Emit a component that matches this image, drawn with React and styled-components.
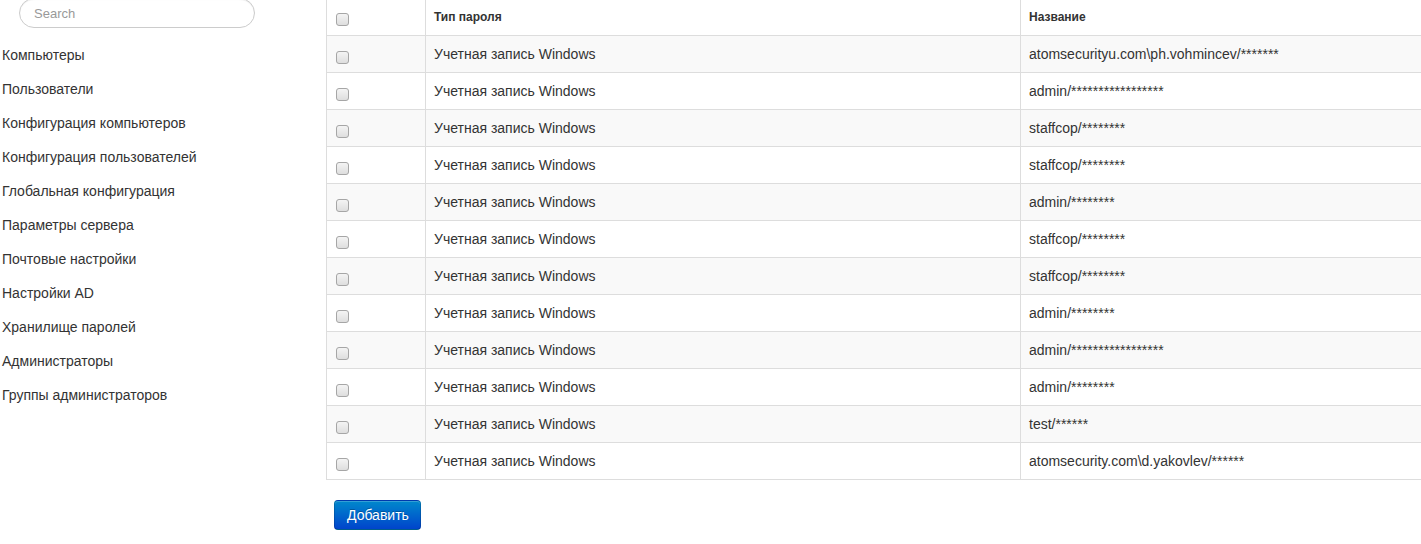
import React from 'react';
import styled, { createGlobalStyle } from 'styled-components';

const GlobalStyle = createGlobalStyle`
  html, body {
    margin: 0;
    padding: 0;
    background: #fff;
    overflow: hidden;
  }
  body {
    font-family: "Liberation Sans", Arial, sans-serif;
    font-size: 14px;
    color: #333;
  }
`;

const menu = [
  'Компьютеры',
  'Пользователи',
  'Конфигурация компьютеров',
  'Конфигурация пользователей',
  'Глобальная конфигурация',
  'Параметры сервера',
  'Почтовые настройки',
  'Настройки AD',
  'Хранилище паролей',
  'Администраторы',
  'Группы администраторов',
];

const rows = [
  'atomsecurityu.com\\ph.vohmincev/*******',
  'admin/*****************',
  'staffcop/********',
  'staffcop/********',
  'admin/********',
  'staffcop/********',
  'staffcop/********',
  'admin/********',
  'admin/*****************',
  'admin/********',
  'test/******',
  'atomsecurity.com\\d.yakovlev/******',
];

const App = () => {
  return (
    <>
      <GlobalStyle />
      <Page>
        <Sidebar>
          <Search placeholder="Search" />
          <Nav>
            {menu.map((item) => (
              <NavItem key={item}>{item}</NavItem>
            ))}
          </Nav>
        </Sidebar>
        <Main>
          <Table>
            <colgroup>
              <col style={{ width: 99 }} />
              <col style={{ width: 595 }} />
              <col />
            </colgroup>
            <thead>
              <tr>
                <Th><Check type="checkbox" $top={6} /></Th>
                <Th>Тип пароля</Th>
                <Th>Название</Th>
              </tr>
            </thead>
            <tbody>
              {rows.map((name, i) => (
                <Row key={i} $striped={i % 2 === 0}>
                  <Td><Check type="checkbox" /></Td>
                  <Td>Учетная запись Windows</Td>
                  <Td>{name}</Td>
                </Row>
              ))}
            </tbody>
          </Table>
          <AddButton>Добавить</AddButton>
        </Main>
      </Page>
    </>
  );
};

export default App;

const Page = styled.div`
  display: grid;
  grid-template-columns: 326px 1fr;
  width: 1421px;
  height: 544px;
  overflow: hidden;
`;

const Sidebar = styled.div`
  display: flex;
  flex-direction: column;
`;

const Search = styled.input`
  box-sizing: border-box;
  width: 236px;
  height: 30px;
  margin: -2px 0 0 19px;
  padding: 0 14px;
  border: 1px solid #ccc;
  border-radius: 15px;
  font-family: "Liberation Sans", Arial, sans-serif;
  font-size: 13px;
  color: #555;
  outline: none;
  box-shadow: inset 0 1px 1px rgba(0, 0, 0, 0.075);
  &::placeholder {
    color: #999;
  }
`;

const Nav = styled.ul`
  list-style: none;
  margin: 10px 0 0;
  padding: 0;
`;

const NavItem = styled.li`
  padding: 7px 2px;
  line-height: 20px;
  font-size: 14px;
  color: #333;
  cursor: pointer;
`;

const Main = styled.div`
  display: flex;
  flex-direction: column;
  align-items: flex-start;
`;

const Table = styled.table`
  width: 1110px;
  margin-top: -2px;
  border-collapse: collapse;
  table-layout: fixed;
  border: 1px solid #ddd;
`;

const Th = styled.th`
  padding: 8px;
  line-height: 20px;
  text-align: left;
  font-size: 12px;
  font-weight: bold;
  vertical-align: top;
  border: 1px solid #ddd;
`;

const Row = styled.tr`
  background: ${(p) => (p.$striped ? '#f9f9f9' : '#fff')};
`;

const Td = styled.td`
  padding: 8px;
  line-height: 20px;
  font-size: 14px;
  vertical-align: top;
  border: 1px solid #ddd;
  white-space: nowrap;
`;

const Check = styled.input`
  appearance: none;
  display: block;
  box-sizing: border-box;
  width: 13px;
  height: 13px;
  margin: ${(p) => p.$top ?? 7}px 0 0 1px;
  border: 1px solid #a6a6a6;
  border-radius: 3px;
  background: linear-gradient(#f4f4f4, #dedede);
`;

const AddButton = styled.button`
  margin: 20px 0 0 8px;
  height: 30px;
  padding: 0 11px 0 12px;
  font-family: "Liberation Sans", Arial, sans-serif;
  font-size: 14px;
  line-height: 20px;
  color: #fff;
  text-shadow: 0 -1px 0 rgba(0, 0, 0, 0.25);
  background: linear-gradient(#0088cc, #0044cc);
  border: 1px solid rgba(0, 0, 0, 0.15);
  border-bottom-color: rgba(0, 0, 0, 0.3);
  border-radius: 4px;
  box-shadow: inset 0 1px 0 rgba(255, 255, 255, 0.2);
  cursor: pointer;
`;
